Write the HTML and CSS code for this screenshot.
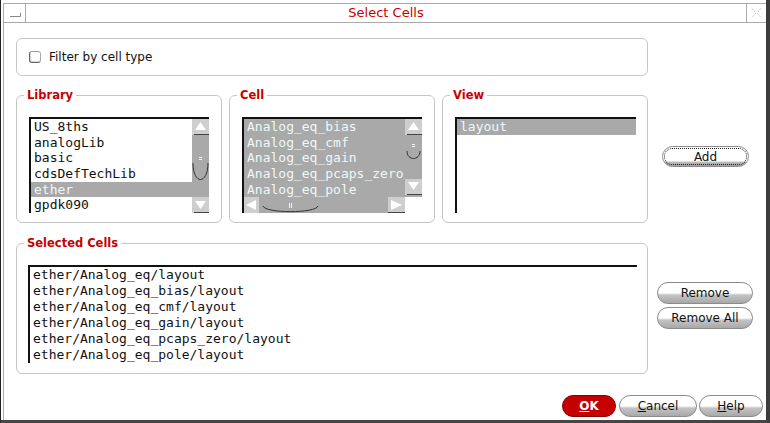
FILE: index.html
```html
<!DOCTYPE html>
<html>
<head>
<meta charset="utf-8">
<title>Select Cells</title>
<link rel="stylesheet" href="styles.css">
</head>
<body>
<div class="frame">
  <div class="inner">
    <div class="titlebar">
      <div class="tb-left"><svg width="21" height="18" viewBox="0 0 21 18"><path d="M6 12.5 H16.5 V8.5" stroke="#888" fill="none"/></svg></div>
      <div class="tb-title">Select Cells</div>
      <div class="tb-right"><svg width="19" height="18" viewBox="0 0 19 18"><path d="M5 4.5 L9 9 L5 13.5 M14 4.5 L10 9 L14 13.5" stroke="#c4c4c4" fill="none" stroke-dasharray="2 1"/></svg></div>
    </div>
    <div class="content">
      <div class="filter"><span class="check"></span><span class="filter-label">Filter by cell type</span></div>

      <div class="row2">
        <fieldset class="group">
          <legend>Library</legend>
          <div class="list">
            <div class="items">
              <div class="item">US_8ths</div>
              <div class="item">analogLib</div>
              <div class="item">basic</div>
              <div class="item">cdsDefTechLib</div>
              <div class="item sel">ether</div>
              <div class="item">gpdk090</div>
            </div>
            <svg class="vscroll" width="17" height="94" viewBox="0 0 17 94">
              <rect width="17" height="94" fill="#a9a9a9"/>
              <rect width="17" height="16" fill="#cecece"/>
              <path d="M8.5 3 L14 11 H3 Z" fill="#fff"/>
              <path d="M2 15.5 H17" stroke="#444"/>
              <path d="M7 38.5 H10 M7 40.5 H10" stroke="#f2f2f2"/>
              <path d="M1 44 C1 66 16 66 16 44" stroke="#333" fill="none"/>
              <rect y="78" width="17" height="16" fill="#cecece"/>
              <path d="M3 82 H14 L8.5 90 Z" fill="#fff"/>
              <path d="M2 93.5 H17" stroke="#444"/>
            </svg>
          </div>
        </fieldset>

        <fieldset class="group">
          <legend>Cell</legend>
          <div class="list cell-list">
            <div class="items all-sel">
              <div class="item">Analog_eq_bias</div>
              <div class="item">Analog_eq_cmf</div>
              <div class="item">Analog_eq_gain</div>
              <div class="item">Analog_eq_pcaps_zero</div>
              <div class="item">Analog_eq_pole</div>
            </div>
            <svg class="vscroll" width="17" height="78" viewBox="0 0 17 78">
              <rect width="17" height="78" fill="#a9a9a9"/>
              <rect width="17" height="16" fill="#cecece"/>
              <path d="M8.5 3 L14 11 H3 Z" fill="#fff"/>
              <path d="M2 15.5 H17" stroke="#444"/>
              <path d="M7 25.5 H10 M7 27.5 H10" stroke="#f2f2f2"/>
              <path d="M2 32 C2 42 15 42 15 32" stroke="#333" fill="none"/>
              <rect y="60" width="17" height="16" fill="#cecece"/>
              <path d="M3 63 H14 L8.5 71 Z" fill="#fff"/>
              <path d="M2 75.5 H17" stroke="#444"/>
            </svg>
            <svg class="hscroll" width="161" height="16" viewBox="0 0 161 16">
              <rect width="161" height="16" fill="#a9a9a9"/>
              <rect width="15" height="16" fill="#cecece"/>
              <path d="M2 8 L12 3 V13 Z" fill="#fff"/>
              <path d="M19 9 C21 16.5 72 16.5 74 9" stroke="#333" fill="none"/>
              <path d="M45.5 6 V11 M47.5 6 V11" stroke="#f2f2f2"/>
              <rect x="144" width="17" height="16" fill="#cecece"/>
              <path d="M147 3 L158 8 L147 13 Z" fill="#fff"/>
              <path d="M144 15.5 H161" stroke="#444"/>
            </svg>
            <div class="corner"></div>
          </div>
        </fieldset>

        <fieldset class="group">
          <legend>View</legend>
          <div class="list view-list">
            <div class="items">
              <div class="item sel">layout</div>
            </div>
          </div>
        </fieldset>

        <div class="add-col">
          <button class="btn add-btn"><span class="focus">Add</span></button>
        </div>
      </div>

      <div class="row3">
        <fieldset class="group sel-group">
          <legend>Selected Cells</legend>
          <div class="list sel-list">
            <div class="items">
              <div class="item">ether/Analog_eq/layout</div>
              <div class="item">ether/Analog_eq_bias/layout</div>
              <div class="item">ether/Analog_eq_cmf/layout</div>
              <div class="item">ether/Analog_eq_gain/layout</div>
              <div class="item">ether/Analog_eq_pcaps_zero/layout</div>
              <div class="item">ether/Analog_eq_pole/layout</div>
            </div>
          </div>
        </fieldset>
        <div class="remove-col">
          <button class="btn remove-btn">Remove</button>
          <button class="btn remove-btn">Remove All</button>
        </div>
      </div>

      <div class="bottom">
        <button class="btn ok-btn"><u>O</u>K</button>
        <button class="btn cancel-btn"><u>C</u>ancel</button>
        <button class="btn help-btn"><u>H</u>elp</button>
      </div>
    </div>
  </div>
</div>
</body>
</html>
```

FILE: styles.css
```css
* { box-sizing: border-box; }

html, body {
  margin: 0;
  padding: 0;
  background: #fff;
}

body {
  width: 770px;
  height: 423px;
  overflow: hidden;
  font-family: "DejaVu Sans", "Noto Sans", sans-serif;
  font-size: 12px;
  color: #111;
}

.frame {
  width: 770px;
  height: 423px;
  border-left: 1px solid #222;
  border-right: 4px solid #3c3c3c;
  border-bottom: 3px solid #464646;
  padding: 3px 0 0 2px;
  display: flex;
  overflow: hidden;
}

.inner {
  flex: 1;
  border-left: 1px solid #aaa;
  display: flex;
  flex-direction: column;
}

.titlebar {
  height: 20px;
  border-top: 1px solid #aaa;
  border-bottom: 1px solid #aaa;
  display: flex;
}

.tb-left {
  width: 22px;
  border-right: 1px solid #aaa;
  display: flex;
}

.tb-right {
  width: 20px;
  border-left: 1px solid #aaa;
  display: flex;
}

.tb-title {
  flex: 1;
  text-align: center;
  color: #c80000;
  font-size: 13px;
  line-height: 18px;
}

.content {
  padding: 15px 0 0 12px;
  display: flex;
  flex-direction: column;
}

.filter {
  width: 632px;
  height: 38px;
  border: 1px solid #c6c6c6;
  border-radius: 6px;
  display: flex;
  align-items: center;
  padding-left: 12px;
}

.check {
  width: 12px;
  height: 12px;
  border: 1px solid;
  border-color: #9a9a9a #a8a8a8 #666 #666;
  border-radius: 3px;
  margin-right: 8px;
  box-shadow: inset 1px -1px 0 #d8d8d8;
}

.filter-label {
  font-size: 12px;
  line-height: 14px;
  color: #111;
}

.row2 {
  display: flex;
  align-items: flex-start;
  gap: 7px;
  margin-top: 12px;
}

.group {
  margin: 0;
  min-width: 0;
  width: 206px;
  border: 1px solid #c6c6c6;
  border-radius: 6px;
  padding: 15px 0 9px 0;
}

.group legend {
  margin-left: 7px;
  padding: 0 3px;
  font-weight: bold;
  font-size: 11.5px;
  line-height: 14px;
  color: #c80000;
}

.list {
  margin-left: 12px;
  width: 180px;
  height: 96px;
  border-top: 2px solid #111;
  border-left: 2px solid #111;
  display: flex;
  background: #fff;
  overflow: hidden;
}

.items {
  flex: 1;
  min-width: 0;
  overflow: hidden;
  font-family: "DejaVu Sans Mono", "Liberation Mono", monospace;
  font-size: 13px;
}

.item {
  height: 15.67px;
  line-height: 15.67px;
  padding-left: 3px;
  white-space: nowrap;
  color: #111;
}

.item.sel,
.all-sel .item {
  background: #a9a9a9;
  color: #eef8f8;
}

.all-sel {
  background: #a9a9a9;
}

.vscroll, .hscroll {
  display: block;
  flex: none;
}

.cell-list {
  display: grid;
  grid-template-columns: 161px 17px;
  grid-template-rows: 78px 16px;
}

.corner {
  background: #fff;
}

.view-list {
  width: 181px;
}

.add-col {
  margin-left: 7px;
  margin-top: 58px;
}

.btn {
  display: flex;
  align-items: center;
  justify-content: center;
  margin: 0;
  padding: 0;
  border: 1px solid #8c8c8c;
  border-radius: 11px;
  background: linear-gradient(to bottom, #fff 0%, #fff 50%, #c4c4c4 60%, #a8a8a8 100%);
  font-family: "DejaVu Sans", "Noto Sans", sans-serif;
  font-size: 12px;
  color: #111;
  line-height: 14px;
}

.add-btn {
  width: 87px;
  height: 21px;
  padding: 1px;
  background: linear-gradient(to bottom, #fff 0%, #fff 72%, #b8b8b8 82%, #a0a0a0 100%);
}

.focus {
  flex: 1;
  align-self: stretch;
  display: flex;
  align-items: center;
  justify-content: center;
  border: 1px dotted #222;
  border-radius: 8px;
}

.row3 {
  display: flex;
  align-items: flex-start;
  margin-top: 13px;
}

.sel-group {
  width: 632px;
  padding-bottom: 10px;
}

.sel-list {
  margin-left: 11px;
  width: 609px;
  height: 98px;
}

.sel-list .item {
  height: 16px;
  line-height: 16px;
}

.remove-col {
  margin-left: 9px;
  margin-top: 46px;
  display: flex;
  flex-direction: column;
  gap: 3px;
}

.remove-btn {
  width: 96px;
  height: 22px;
}

.bottom {
  margin-top: 21px;
  display: flex;
  justify-content: flex-end;
  padding-right: 3px;
}

.bottom .btn {
  height: 22px;
}

.ok-btn {
  width: 54px;
  margin-right: 3px;
  background: #c40000;
  border-color: #8a0000;
  color: #fff;
  font-weight: bold;
}

.cancel-btn {
  width: 78px;
  margin-right: 2px;
}

.help-btn {
  width: 64px;
}
```
